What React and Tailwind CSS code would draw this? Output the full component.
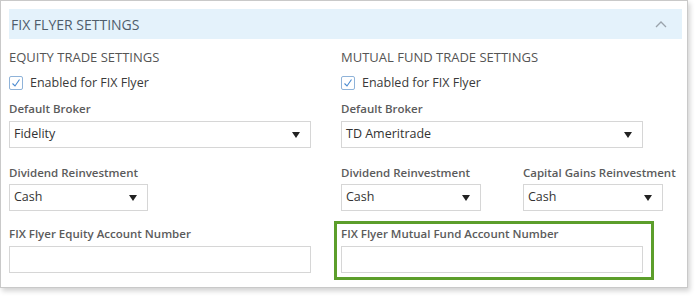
import React from "react";

const Caret = () => (
    <svg width="8" height="6" viewBox="0 0 8 6" className="shrink-0">
        <path d="M0 0 H8 L4 6 Z" fill="#222" />
    </svg>
);

const Select = ({ value, className = "" }) => (
    <div
        className={`h-[27px] border border-[#d6d6d6] bg-white flex items-center justify-between pl-[4px] pr-[10px] text-[12.5px] text-[#333] ${className}`}
    >
        <span>{value}</span>
        <Caret />
    </div>
);

const Label = ({ children }) => (
    <div className="h-[20px] flex items-center whitespace-nowrap text-[11.5px] font-semibold text-[#5b5b5b]">{children}</div>
);

const Checkbox = () => (
    <div className="flex items-center gap-[7px] h-[20px]">
        <div className="w-[14px] h-[14px] rounded-[2px] border border-[#8fb3d9] bg-white flex items-center justify-center">
            <svg width="10" height="10" viewBox="0 0 10 10">
                <path d="M1.5 5.5 L4 8 L8.5 1.5" fill="none" stroke="#4a8ad0" strokeWidth="1.1" />
            </svg>
        </div>
        <span className="text-[12.5px] text-[#3a3a3a]">Enabled for FIX Flyer</span>
    </div>
);

export default function App() {
    return (
        <div className="w-[697px] h-[296px] bg-white font-['Open_Sans',sans-serif]">
            <div className="relative w-[688px] h-[288px] border border-[#c9c9c9] shadow-[2px_3px_5px_rgba(0,0,0,0.18)] pl-[8px] pr-[5px] pt-[8px]">
                {/* header */}
                <div className="h-[30px] bg-[#e4f2fb] flex items-center justify-between pl-[2px] pr-[15px]">
                    <span className="text-[14px] text-[#4f5d6b]">FIX FLYER SETTINGS</span>
                    <svg width="12" height="7" viewBox="0 0 12 7">
                        <path d="M1 6 L6 1 L11 6" fill="none" stroke="#9aa3ab" strokeWidth="1.3" />
                    </svg>
                </div>

                <div className="grid grid-cols-[302px_1fr] gap-x-[30px]">
                    {/* equity */}
                    <div className="flex flex-col">
                        <div className="h-[20px] mt-[9px] flex items-center text-[13px] text-[#555]">EQUITY TRADE SETTINGS</div>
                        <div className="mt-[5px]"><Checkbox /></div>
                        <div className="mt-[6px]"><Label>Default Broker</Label></div>
                        <Select value="Fidelity" className="mt-[2px] w-[302px] h-[26px]" />
                        <div className="mt-[15px]"><Label>Dividend Reinvestment</Label></div>
                        <Select value="Cash" className="mt-[1px] w-[139px]" />
                        <div className="mt-[13px]"><Label>FIX Flyer Equity Account Number</Label></div>
                        <div className="mt-[2px] w-[302px] h-[27px] border border-[#d6d6d6] bg-white" />
                    </div>

                    {/* mutual fund */}
                    <div className="flex flex-col">
                        <div className="h-[20px] mt-[9px] flex items-center text-[13px] text-[#555]">MUTUAL FUND TRADE SETTINGS</div>
                        <div className="mt-[5px]"><Checkbox /></div>
                        <div className="mt-[6px]"><Label>Default Broker</Label></div>
                        <Select value="TD Ameritrade" className="mt-[2px] w-[302px] h-[26px]" />
                        <div className="mt-[15px] flex gap-[42px]">
                            <div className="flex flex-col">
                                <Label>Dividend Reinvestment</Label>
                                <Select value="Cash" className="mt-[1px] w-[140px]" />
                            </div>
                            <div className="flex flex-col">
                                <Label>Capital Gains Reinvestment</Label>
                                <Select value="Cash" className="mt-[1px] w-[140px]" />
                            </div>
                        </div>
                        <div className="mt-[13px]"><Label>FIX Flyer Mutual Fund Account Number</Label></div>
                        <div className="mt-[2px] w-[302px] h-[27px] border border-[#d6d6d6] bg-white" />
                    </div>
                </div>

                {/* highlight annotation */}
                <div className="absolute left-[333px] top-[220px] w-[320px] h-[59px] border-[3px] border-[#5c9e2b]" />
            </div>
        </div>
    );
}
